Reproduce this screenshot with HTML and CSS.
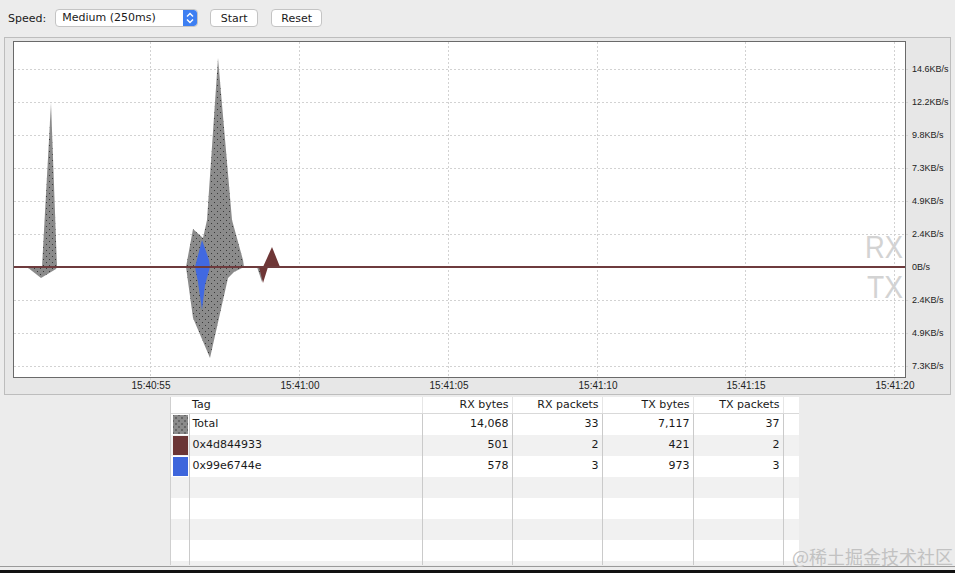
FILE: index.html
```html
<!DOCTYPE html>
<html lang="en">
<head>
    <meta charset="UTF-8">
    <title>Network Traffic</title>
    <link rel="stylesheet" href="styles.css">
</head>
<body>
    <div class="toolbar">
        <span class="label">Speed:</span>
        <div class="select">
            <span class="select-value">Medium (250ms)</span>
            <span class="stepper">
                <svg width="14" height="18" viewBox="0 0 14 18">
                    <path d="M4 7.5 L7 4.5 L10 7.5" />
                    <path d="M4 10.5 L7 13.5 L10 10.5" />
                </svg>
            </span>
        </div>
        <button class="btn">Start</button>
        <button class="btn btn-reset">Reset</button>
    </div>

    <div class="chart-panel">
        <svg class="chart" width="947" height="358" viewBox="4 37 947 358">
            <defs>
                <pattern id="dots" width="6" height="6" patternUnits="userSpaceOnUse">
                    <rect width="6" height="6" fill="#8b8b8b" />
                    <rect x="1" y="1" width="1" height="1" fill="#3a3a3a" />
                    <rect x="4" y="4" width="1" height="1" fill="#3a3a3a" />
                </pattern>
            </defs>

            <!-- panel + plot area -->
            <rect class="panel-bg" x="4.5" y="37.5" width="946" height="357" />
            <rect class="plot-bg" x="13.5" y="41.5" width="892" height="336" />

            <!-- grid -->
            <g class="grid">
                <line x1="14" x2="909" y1="69.5" y2="69.5" />
                <line x1="14" x2="909" y1="102.5" y2="102.5" />
                <line x1="14" x2="909" y1="135.5" y2="135.5" />
                <line x1="14" x2="909" y1="168.5" y2="168.5" />
                <line x1="14" x2="909" y1="201.5" y2="201.5" />
                <line x1="14" x2="909" y1="234.5" y2="234.5" />
                <line x1="14" x2="909" y1="300.5" y2="300.5" />
                <line x1="14" x2="909" y1="333.5" y2="333.5" />
                <line x1="14" x2="909" y1="366.5" y2="366.5" />
                <line x1="150.5" x2="150.5" y1="42" y2="380" />
                <line x1="299.5" x2="299.5" y1="42" y2="380" />
                <line x1="448.5" x2="448.5" y1="42" y2="380" />
                <line x1="597.5" x2="597.5" y1="42" y2="380" />
                <line x1="745.5" x2="745.5" y1="42" y2="380" />
                <line x1="894.5" x2="894.5" y1="42" y2="380" />
            </g>

            <!-- RX / TX watermark -->
            <text class="dir-label" x="903" y="258" text-anchor="end" textLength="38" lengthAdjust="spacingAndGlyphs">RX</text>
            <text class="dir-label" x="903" y="298" text-anchor="end" textLength="36" lengthAdjust="spacingAndGlyphs">TX</text>

            <!-- series -->
            <polygon class="area-total" points="42,267 51,103 57,267" />
            <polygon class="area-total" points="27,267 41,278 56,269 57,267" />
            <polygon class="area-total" points="186,267 193,229 203,238 207,220 218,58 232,220 243,260 244,267 234,272 228,278 210,358 193,318" />
            <polygon class="area-total" points="257,267 262,282 263,267" />
            <polygon class="area-blue" points="195,267 202,240 209,260 210,267 205,285 202,310 198,282" />
            <polygon class="area-maroon" points="263,267 272,247 280,267" />
            <polygon class="area-maroon" points="259,267 263,283 268,267" />

            <line class="zero-line" x1="14" x2="905" y1="267" y2="267" />

            <!-- y axis -->
            <g class="axis-y">
                <text x="912" y="72">14.6KB/s</text>
                <text x="912" y="105">12.2KB/s</text>
                <text x="912" y="138">9.8KB/s</text>
                <text x="912" y="171">7.3KB/s</text>
                <text x="912" y="204">4.9KB/s</text>
                <text x="912" y="237">2.4KB/s</text>
                <text x="912" y="270">0B/s</text>
                <text x="912" y="303">2.4KB/s</text>
                <text x="912" y="336">4.9KB/s</text>
                <text x="912" y="369">7.3KB/s</text>
            </g>

            <!-- x axis -->
            <g class="axis-x">
                <text x="151" y="389">15:40:55</text>
                <text x="300" y="389">15:41:00</text>
                <text x="449" y="389">15:41:05</text>
                <text x="598" y="389">15:41:10</text>
                <text x="746" y="389">15:41:15</text>
                <text x="895" y="389">15:41:20</text>
            </g>
        </svg>
    </div>

    <div class="table-wrap">
        <table class="stats">
            <colgroup>
                <col style="width: 18px">
                <col style="width: 233px">
                <col style="width: 90px">
                <col style="width: 90px">
                <col style="width: 91px">
                <col style="width: 90px">
                <col>
            </colgroup>
            <thead>
                <tr>
                    <th></th>
                    <th class="col-tag">Tag</th>
                    <th>RX bytes</th>
                    <th>RX packets</th>
                    <th>TX bytes</th>
                    <th>TX packets</th>
                    <th class="col-fill"></th>
                </tr>
            </thead>
            <tbody>
                <tr>
                    <td class="col-swatch"><div class="swatch swatch-total"></div></td>
                    <td class="col-tag">Total</td>
                    <td>14,068</td>
                    <td>33</td>
                    <td>7,117</td>
                    <td>37</td>
                    <td class="col-fill"></td>
                </tr>
                <tr>
                    <td class="col-swatch"><div class="swatch swatch-maroon"></div></td>
                    <td class="col-tag">0x4d844933</td>
                    <td>501</td>
                    <td>2</td>
                    <td>421</td>
                    <td>2</td>
                    <td class="col-fill"></td>
                </tr>
                <tr>
                    <td class="col-swatch"><div class="swatch swatch-blue"></div></td>
                    <td class="col-tag">0x99e6744e</td>
                    <td>578</td>
                    <td>3</td>
                    <td>973</td>
                    <td>3</td>
                    <td class="col-fill"></td>
                </tr>
                <tr><td class="col-swatch"></td><td></td><td></td><td></td><td></td><td></td><td class="col-fill"></td></tr>
                <tr><td class="col-swatch"></td><td></td><td></td><td></td><td></td><td></td><td class="col-fill"></td></tr>
                <tr><td class="col-swatch"></td><td></td><td></td><td></td><td></td><td></td><td class="col-fill"></td></tr>
                <tr><td class="col-swatch"></td><td></td><td></td><td></td><td></td><td></td><td class="col-fill"></td></tr>
                <tr><td class="col-swatch"></td><td></td><td></td><td></td><td></td><td></td><td class="col-fill"></td></tr>
            </tbody>
        </table>
    </div>

    <div class="window-bottom"></div>

    <div class="watermark">@稀土掘金技术社区</div>
</body>
</html>
```

FILE: styles.css
```css
* {
    margin: 0;
    padding: 0;
    box-sizing: border-box;
}

body {
    width: 955px;
    height: 573px;
    overflow: hidden;
    position: relative;
    background-color: #ececec;
    font-family: "DejaVu Sans", sans-serif;
    font-size: 11px;
    color: #1a1a1a;
}

/* toolbar */
.toolbar {
    display: flex;
    align-items: center;
    height: 37px;
    padding: 0 0 1px 8px;
}

.label {
    margin-right: 9px;
}

.select {
    display: flex;
    align-items: center;
    width: 143px;
    height: 18px;
    background-color: white;
    border: 1px solid #c4c4c4;
    border-radius: 4px;
    overflow: hidden;
    margin-right: 12px;
}

.select-value {
    flex: 1;
    padding-left: 6px;
    line-height: 16px;
}

.stepper {
    display: flex;
    width: 14px;
    height: 16px;
    background-color: #3d7ff2;
    border-radius: 0 3px 3px 0;
}

.stepper svg {
    display: block;
    margin-top: -1px;
}

.stepper path {
    fill: none;
    stroke: white;
    stroke-width: 1.4;
}

.btn {
    height: 18px;
    width: 48px;
    background-color: white;
    border: 1px solid #c4c4c4;
    border-radius: 4px;
    font-family: "DejaVu Sans", sans-serif;
    font-size: 11px;
    color: #1a1a1a;
    margin-right: 13px;
}

.btn-reset {
    width: 51px;
}

/* chart */
.chart-panel {
    margin-left: 4px;
    width: 947px;
    height: 358px;
}

.chart {
    display: block;
}

.panel-bg {
    fill: #e7e7e7;
    stroke: #bdbdbd;
    stroke-width: 1;
}

.plot-bg {
    fill: white;
    stroke: #6a6a6a;
    stroke-width: 1;
}

.grid line {
    stroke: #d2d2d2;
    stroke-width: 1;
    stroke-dasharray: 2 2;
}

.dir-label {
    font-family: "Liberation Sans", sans-serif;
    font-size: 31px;
    fill: #d3d3d3;
}

.area-total {
    fill: url(#dots);
}

.area-blue {
    fill: #4169e1;
}

.area-maroon {
    fill: #6e3636;
}

.zero-line {
    stroke: #6e3b3d;
    stroke-width: 2;
}

.axis-y text {
    font-family: "Liberation Sans", sans-serif;
    font-size: 9px;
    fill: #222;
}

.axis-x text {
    font-family: "Liberation Sans", sans-serif;
    font-size: 10px;
    fill: #222;
    text-anchor: middle;
}

/* table */
.table-wrap {
    margin: 2px 0 0 170px;
    width: 629px;
    height: 168px;
    overflow: hidden;
    background-color: white;
    border-left: 1px solid #cfcfcf;
}

.stats {
    width: 628px;
    border-collapse: collapse;
    table-layout: fixed;
}

.stats th {
    height: 16px;
    font-weight: normal;
    text-align: right;
    padding: 0 3px 0 4px;
    border-bottom: 1px solid #d9d9d9;
    border-right: 1px solid #e6e6e6;
    line-height: 14px;
}

.stats th:first-child {
    border-right: none;
}

.stats td {
    height: 21px;
    padding: 0 3px 0 4px;
    text-align: right;
    border-right: 1px solid #cacaca;
    line-height: 20px;
}

.stats .col-tag {
    text-align: left;
    padding-left: 3px;
}

.stats .col-fill {
    border-right: none;
}

.stats td.col-swatch {
    padding: 1px 0 1px 2px;
}

.stats tbody tr:nth-child(even) {
    background-color: #f1f1f1;
}

.swatch {
    width: 15px;
    height: 19px;
}

.swatch-total {
    background-color: #8b8b8b;
    background-image:
        radial-gradient(#3a3a3a 0.6px, transparent 0.8px),
        radial-gradient(#3a3a3a 0.6px, transparent 0.8px);
    background-size: 6px 6px;
    background-position: 0 0, 3px 3px;
}

.swatch-maroon {
    background-color: #6b3535;
}

.swatch-blue {
    background-color: #3e66dc;
}

.window-bottom {
    margin-top: 1px;
    height: 7px;
    border-top: 1px solid #9a9a9a;
    border-bottom: 3px solid #111;
}

.watermark {
    position: absolute;
    left: 792px;
    top: 543px;
    font-family: "Noto Sans CJK SC", sans-serif;
    font-size: 18px;
    color: #c2c2c2;
}
```
